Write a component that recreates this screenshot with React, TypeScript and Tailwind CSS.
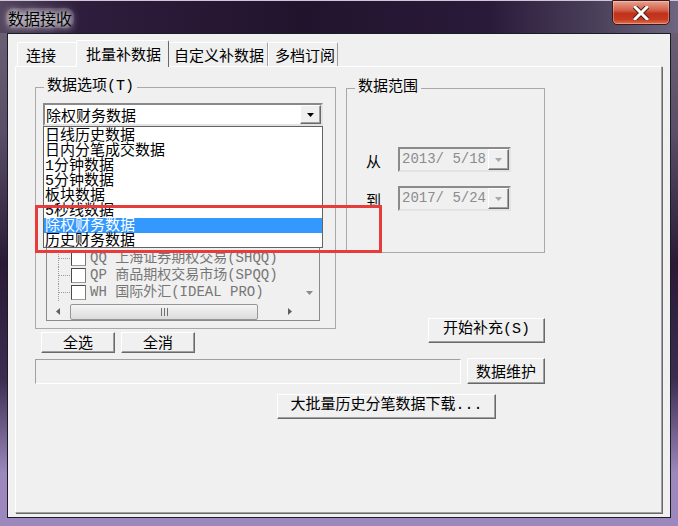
import React from "react";

const mono = "font-['Liberation_Mono','Noto_Sans_CJK_SC',monospace]";
const raised =
  "bg-[#f0f0f0] border border-t-white border-l-white border-r-[#696969] border-b-[#696969] shadow-[inset_-1px_-1px_0_#a0a0a0]";
const sunken =
  "border-2 border-t-[#8a8a8a] border-l-[#8a8a8a] border-r-[#e3e3e3] border-b-[#e3e3e3]";

function Tri({ dir = "down", color = "#000" }: { dir?: "down" | "left" | "right"; color?: string }) {
  if (dir === "down")
    return (
      <svg width="7" height="4">
        <polygon points="0,0 7,0 3.5,4" fill={color} />
      </svg>
    );
  return (
    <svg width="4" height="7">
      <polygon points={dir === "left" ? "4,0 4,7 0,3.5" : "0,0 0,7 4,3.5"} fill={color} />
    </svg>
  );
}

function Btn({ children, className = "" }: { children: React.ReactNode; className?: string }) {
  return (
    <div className={`flex items-center justify-center text-[15px] text-black ${raised} ${className}`}>
      {children}
    </div>
  );
}

function Group({ title, className = "", children }: { title: string; className?: string; children?: React.ReactNode }) {
  return (
    <div className={`relative border border-[#a9a9a9] ${className}`}>
      <span className={`absolute left-[8px] top-[-12px] px-[3px] bg-[#f0f0f0] text-[15px] leading-[22px] text-black ${mono}`}>
        {title}
      </span>
      {children}
    </div>
  );
}

function Tab({ label, active, className }: { label: string; active?: boolean; className: string }) {
  if (active)
    return (
      <div
        className={`relative z-10 -mx-[2px] -mb-px h-[27px] flex items-center bg-[#f0f0f0] border-t border-l border-white border-r border-r-[#696969] rounded-t-[2px] text-[15px] text-black ${className}`}
      >
        {label}
      </div>
    );
  return (
    <div
      className={`h-[24px] flex items-center pt-[2px] border-t border-l border-white border-r border-r-[#a0a0a0] rounded-t-[2px] text-[15px] text-black ${className}`}
    >
      {label}
    </div>
  );
}

function TreeRow({ text }: { text: string }) {
  return (
    <div className="flex items-center h-[17px]">
      <svg width="24" height="17" className="shrink-0">
        <line x1="11.5" y1="0" x2="11.5" y2="17" stroke="#9a9a9a" strokeDasharray="1 1" />
        <line x1="12" y1="8.5" x2="24" y2="8.5" stroke="#9a9a9a" strokeDasharray="1 1" />
      </svg>
      <div className="w-[15px] h-[15px] bg-white border border-[#4a4a4a] border-b-[#9a9a9a] border-r-[#7a7a7a] shrink-0" />
      <span className={`ml-[4px] text-[14px] leading-[17px] text-[#767676] whitespace-pre ${mono}`}>{text}</span>
    </div>
  );
}

function DateBox({ value }: { value: string }) {
  return (
    <div className={`flex items-center w-[113px] h-[25px] bg-[#f0f0f0] ${sunken}`}>
      <span className={`flex-1 pl-[2px] text-[14px] text-[#8c8c8c] whitespace-pre ${mono}`}>{value}</span>
      <div className={`w-[21px] h-full flex items-center justify-center ${raised}`}>
        <Tri color="#a8a8a8" />
      </div>
    </div>
  );
}

const options = ["日线历史数据", "日内分笔成交数据", "1分钟数据", "5分钟数据", "板块数据", "5秒线数据", "除权财务数据", "历史财务数据"];

export default function App() {
  return (
    <div className="relative w-[678px] h-[526px] overflow-hidden flex flex-col font-['Noto_Sans_CJK_SC',sans-serif] bg-[linear-gradient(to_bottom,#6e6478_0%,#5a4e68_25%,#2a1a36_50%,#3c2c50_72%,#9c88bc_90%,#9c88bc_100%)]">
      {/* title bar */}
      <div className="h-[33px] flex items-start border-t border-[#cfc6d8] bg-[linear-gradient(to_right,#54465f_0%,#2e1d3c_12%,#22132d_45%,#2a1a3a_72%,#4a405a_88%,#6e6680_100%)]">
        <span className="ml-[6px] mt-[7px] px-[2px] text-[16px] leading-[20px] text-black bg-[#9a8ea4]/25 rounded-[8px] [text-shadow:0_0_6px_#fff,0_0_10px_#fff]">
          数据接收
        </span>
        <div className="ml-auto mr-[8px] -mt-px w-[58px] h-[25px] flex items-center justify-center rounded-b-[5px] border border-[#3a1a1a] shadow-[inset_0_0_0_1px_rgba(255,255,255,0.3)] bg-[linear-gradient(to_bottom,#e9a290_0%,#d26048_40%,#c0301a_55%,#c83a22_80%,#e07050_100%)]">
          <svg width="16" height="14" viewBox="0 0 16 14">
            <path d="M2 1 L14 13 M14 1 L2 13" stroke="#5a1a10" strokeWidth="5" strokeLinecap="square" />
            <path d="M2 1 L14 13 M14 1 L2 13" stroke="#ffffff" strokeWidth="3" strokeLinecap="square" />
          </svg>
        </div>
      </div>

      {/* client */}
      <div className="mx-[7px] h-[485px] border border-[#1c1c24] bg-[#f0f0f0] flex flex-col">
        <div className="flex items-end h-[32px] pl-[9px]">
          <Tab label="连接" className="w-[61px] pl-[8px]" />
          <Tab label="批量补数据" active className="w-[93px] pl-[9px]" />
          <Tab label="自定义补数据" className="w-[101px] pl-[6px]" />
          <Tab label="多档订阅" className="w-[70px] pl-[6px]" />
        </div>

        <div className="ml-[7px] w-[647px] h-[447px] border-l border-t border-white border-r border-b border-r-[#a0a0a0] border-b-[#a0a0a0] shadow-[1px_1px_0_#696969] pt-[20px] pl-[19px]">
          <div className="flex">
            {/* left column */}
            <div className="w-[301px] flex flex-col">
              <Group title="数据选项(T)" className="w-[301px] h-[242px]">
                <div className={`relative ml-[7px] mt-[15px] w-[280px] h-[23px] bg-white flex items-center ${sunken}`}>
                  <span className="flex-1 pl-[1px] text-[15px] leading-[19px] text-black">除权财务数据</span>
                  <div className={`w-[21px] h-full flex items-center justify-center ${raised}`}>
                    <Tri />
                  </div>
                  <div className={`absolute left-[-2px] top-[21px] z-10 w-[280px] h-[122px] pt-px bg-white border border-[#646464] flex flex-col ${mono}`}>
                    {options.map((o, i) => (
                      <div
                        key={o}
                        className={
                          i === 6
                            ? "h-[15px] shrink-0 pl-[1px] text-[15px] leading-[17px] bg-[#3399ff] text-white whitespace-nowrap"
                            : "h-[15px] shrink-0 pl-[1px] text-[15px] leading-[17px] text-black whitespace-nowrap"
                        }
                      >
                        {o}
                      </div>
                    ))}
                  </div>
                </div>

                <div className="ml-[10px] mt-[5px] w-[274px] h-[190px] border border-[#8a8a8a] bg-[#f0f0f0] flex flex-col overflow-hidden">
                  <div className="flex-1 flex">
                    <div className="flex-1 flex flex-col justify-end pb-[2px]">
                      <TreeRow text="QQ 上海证券期权交易(SHQQ)" />
                      <TreeRow text="QP 商品期权交易市场(SPQQ)" />
                      <TreeRow text="WH 国际外汇(IDEAL PRO)" />
                    </div>
                    <div className="w-[19px] flex flex-col justify-end">
                      <div className="h-[17px] mb-[2px] flex items-center justify-center">
                        <Tri color="#8a8a8a" />
                      </div>
                    </div>
                  </div>
                  <div className="h-[17px] flex items-center">
                    <div className="w-[21px] h-full flex items-center justify-center">
                      <Tri dir="left" color="#606060" />
                    </div>
                    <div className="flex-1 h-full flex items-center">
                      <div className="ml-[2px] w-[188px] h-[16px] rounded-[2px] border border-[#979797] bg-[linear-gradient(to_bottom,#f4f4f4,#dcdcdc)] flex items-center justify-center">
                        <svg width="7" height="8">
                          <path d="M0.5 0 V8 M3.5 0 V8 M6.5 0 V8" stroke="#707070" />
                        </svg>
                      </div>
                    </div>
                    <div className="w-[21px] h-full flex items-center justify-center">
                      <Tri dir="right" color="#606060" />
                    </div>
                    <div className="w-[19px] h-full" />
                  </div>
                </div>
              </Group>
              <div className="flex mt-[3px] gap-[6px] pl-[6px]">
                <Btn className="w-[74px] h-[21px]">全选</Btn>
                <Btn className="w-[74px] h-[21px]">全消</Btn>
              </div>
            </div>

            {/* right column */}
            <div className="ml-[10px] w-[199px] flex flex-col">
              <Group title="数据范围" className="mt-px w-[199px] h-[165px] pt-[58px] pl-[19px]">
                <div className="flex items-center gap-[17px]">
                  <span className="w-[15px] text-[15px] leading-[20px] text-black mt-[3px]">从</span>
                  <DateBox value="2013/ 5/18" />
                </div>
                <div className="flex items-center gap-[17px] mt-[14px]">
                  <span className="w-[15px] text-[15px] leading-[20px] text-black mt-[3px]">到</span>
                  <DateBox value="2017/ 5/24" />
                </div>
              </Group>
              <Btn className={`mt-[65px] self-end w-[117px] h-[25px] ${mono}`}>开始补充(S)</Btn>
            </div>
          </div>

          <div className="flex items-start mt-[6px]">
            <div className="w-[426px] h-[25px] border border-t-[#a0a0a0] border-l-[#a0a0a0] border-r-white border-b-white" />
            <Btn className="ml-[6px] -mt-px w-[78px] h-[26px]">数据维护</Btn>
          </div>

          <Btn className={`mt-[10px] ml-[242px] w-[219px] h-[25px] ${mono}`}>大批量历史分笔数据下载...</Btn>
        </div>
      </div>

      {/* annotation */}
      <div className="absolute left-[35px] top-[205px] w-[347px] h-[48px] border-[3px] border-[#e63c3c] z-20" />
    </div>
  );
}
